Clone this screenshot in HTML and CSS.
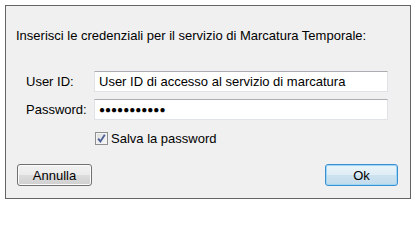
FILE: index.html
```html
<!DOCTYPE html>
<html lang="it">
<head>
<meta charset="utf-8">
<title>Marcatura Temporale</title>
<link rel="stylesheet" href="styles.css">
</head>
<body>
<div class="dialog">
  <p class="intro">Inserisci le credenziali per il servizio di Marcatura Temporale:</p>
  <div class="form">
    <label class="lbl" for="uid">User ID:</label>
    <input class="field" id="uid" type="text" value="User ID di accesso al servizio di marcatura">
    <label class="lbl" for="pwd">Password:</label>
    <div class="field pwd" id="pwd">●●●●●●●●●●●</div>
    <div class="check-row">
      <span class="check">
        <svg width="11" height="11" viewBox="0 0 11 11"><path d="M2.2 5.6 L4.4 8.4 L8.8 1.8" fill="none" stroke="#4a5f96" stroke-width="1.8"/></svg>
      </span>
      <span class="check-text">Salva la password</span>
    </div>
  </div>
  <div class="buttons">
    <button class="btn cancel">Annulla</button>
    <button class="btn ok">Ok</button>
  </div>
</div>
</body>
</html>
```
FILE: styles.css
```css
html, body {
  margin: 0;
  background: #ffffff;
}
body {
  padding: 5px;
  font-family: "Liberation Sans", Arial, sans-serif;
  font-size: 13px;
  line-height: 15px;
  color: #000;
}
.dialog {
  box-sizing: border-box;
  width: 406px;
  height: 194px;
  border: 1px solid #646464;
  background: #f0f0f0;
  display: flex;
  flex-direction: column;
  padding: 22px 12px 12px 0;
}
.intro {
  margin: 0 0 0 10px;
}
.form {
  margin: 28px 0 0 20px;
  display: grid;
  grid-template-columns: 68px 294px;
  row-gap: 7px;
  align-items: center;
}
.lbl {
  display: block;
}
.field {
  box-sizing: border-box;
  height: 21px;
  width: 294px;
  margin: 0;
  border: 1px solid #dfe3e8;
  border-top-color: #abadb3;
  border-radius: 0;
  background: #fff;
  padding: 0 4px;
  font: 13px/15px "Liberation Sans", Arial, sans-serif;
  color: #000;
  outline: none;
}
.pwd {
  display: flex;
  align-items: center;
  padding-left: 4px;
  font-family: "Liberation Sans", Arial, sans-serif;
  font-size: 10px;
  letter-spacing: 0;
}
.check-row {
  grid-column: 2;
  display: flex;
  align-items: center;
  margin-top: 4px;
  margin-left: 1px;
}
.check {
  box-sizing: border-box;
  width: 13px;
  height: 13px;
  border: 1px solid #8e8f8f;
  background: linear-gradient(135deg, #dcdcdc, #f8f8f8);
  box-shadow: inset 0 0 0 1px #f4f4f4;
  display: flex;
  align-items: center;
  justify-content: center;
}
.check svg {
  display: block;
}
.check-text {
  margin-left: 3px;
}
.buttons {
  margin-top: auto;
  display: flex;
  justify-content: space-between;
  padding-left: 11px;
}
.btn {
  box-sizing: border-box;
  height: 22px;
  margin: 0;
  padding: 0;
  border: 1px solid #707070;
  border-radius: 3px;
  font: 13px/15px "Liberation Sans", Arial, sans-serif;
  color: #000;
  background: linear-gradient(#f2f2f2 0%, #ebebeb 50%, #dddddd 50%, #cfcfcf 100%);
  box-shadow: inset 0 0 0 1px #fcfcfc;
}
.cancel {
  width: 75px;
}
.ok {
  width: 73px;
  border-color: #3c8fd0;
  background: linear-gradient(#eaf4fa 0%, #dfedf6 50%, #cde2ef 50%, #c2dcec 100%);
  box-shadow: inset 0 0 0 1px #9ed6f5;
}
```
